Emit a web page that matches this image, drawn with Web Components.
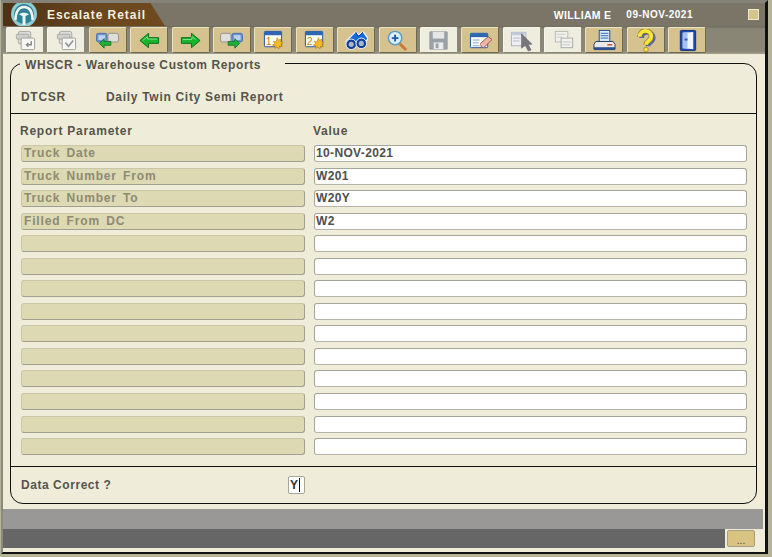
<!DOCTYPE html>
<html>
<head>
<meta charset="utf-8">
<title>Escalate Retail</title>
<style>
    html, body { margin: 0; padding: 0; background: #b5b498; }
    body { font-family: "Liberation Sans", Arial, sans-serif; overflow: hidden; }
</style>
</head>
<body>
<es-window>
    <es-titlebar slot="title" user="WILLIAM E" date="09-NOV-2021">Escalate Retail</es-titlebar>
    <es-toolbar slot="tools">
        <es-tool icon="docback" off></es-tool>
        <es-tool icon="doccheck" off></es-tool>
        <es-tool icon="prevscreen"></es-tool>
        <es-tool icon="left"></es-tool>
        <es-tool icon="right"></es-tool>
        <es-tool icon="nextscreen"></es-tool>
        <es-tool icon="new1"></es-tool>
        <es-tool icon="new2"></es-tool>
        <es-tool icon="binoculars"></es-tool>
        <es-tool icon="zoom"></es-tool>
        <es-tool icon="save" off></es-tool>
        <es-tool icon="erase"></es-tool>
        <es-tool icon="pointer" off></es-tool>
        <es-tool icon="copies" off></es-tool>
        <es-tool icon="printer"></es-tool>
        <es-tool icon="help"></es-tool>
        <es-tool icon="exit"></es-tool>
    </es-toolbar>
    <es-panel slot="main" legend="WHSCR - Warehouse Custom Reports">
        <es-report-head code="DTCSR">Daily Twin City Semi Report</es-report-head>
        <es-param-grid>
            <es-param label="Truck Date" value="10-NOV-2021"></es-param>
            <es-param label="Truck Number From" value="W201"></es-param>
            <es-param label="Truck Number To" value="W20Y"></es-param>
            <es-param label="Filled From DC" value="W2"></es-param>
            <es-param></es-param>
            <es-param></es-param>
            <es-param></es-param>
            <es-param></es-param>
            <es-param></es-param>
            <es-param></es-param>
            <es-param></es-param>
            <es-param></es-param>
            <es-param></es-param>
            <es-param></es-param>
        </es-param-grid>
        <es-confirm value="Y">Data Correct ?</es-confirm>
    </es-panel>
    <es-statusbar slot="status"></es-statusbar>
</es-window>

<script>
// toolbar pictures, 24 box
const STAR = `<path d="M16 9l1.200 2.800 2.600-1.300-.7 2.800 2.900.7-2.300 1.900 1.500 2.500-2.900-.4-.7 2.900-1.900-2.300-2.300 1.700.3-2.900-2.900-.5 2.500-1.500-1.500-2.500 2.900.6z" fill="#f8bc20" stroke="#b5780e" stroke-width=".6"/>`;

const ICONS = {
    docback: `
        <rect x="4.500" y="2.500" width="13" height="13" rx="2" fill="#dcdcd8" stroke="#a8a8a4"/>
        <rect x="2.500" y="5.500" width="13" height="5" rx="1" fill="#cfcfcb" stroke="#a8a8a4"/>
        <rect x="7.500" y="9.500" width="14" height="12" rx="1" fill="#f6f6f2" stroke="#a0a09c"/>
        <path d="M18 12.500v4h-5M15 14.500l-2 2 2 2" fill="none" stroke="#8a8a8e" stroke-width="1.500"/>`,
    doccheck: `
        <rect x="4.500" y="2.500" width="13" height="13" rx="2" fill="#dcdcd8" stroke="#a8a8a4"/>
        <rect x="2.500" y="5.500" width="13" height="5" rx="1" fill="#cfcfcb" stroke="#a8a8a4"/>
        <rect x="7.500" y="9.500" width="14" height="12" rx="1" fill="#f6f6f2" stroke="#a0a09c"/>
        <path d="M11 14l3 4 5-6" fill="none" stroke="#95959a" stroke-width="1.800"/>`,
    prevscreen: `
        <rect x="0.500" y="4.500" width="11" height="9" rx="2" fill="#6f94ce" stroke="#4a70ac"/>
        <rect x="2.500" y="6.500" width="7" height="5" fill="#bcd2ee"/>
        <rect x="12.500" y="4.500" width="11" height="9" rx="2" fill="#dededa" stroke="#8f8f8c"/>
        <path d="M3.500 15l5-5v3h7v4h-7v3z" fill="#1fb13a" stroke="#0d6b1f" stroke-width=".8"/>`,
    left: `<path d="M2 12l9-7.500v4.500h10.500v6H11v4.500z" fill="#17b52e" stroke="#0c6e1b"/><path d="M5 12l5-4v2.500h10" fill="none" stroke="#7fe28a"/>`,
    right: `<path d="M22 12l-9-7.500v4.500H2.500v6H13v4.500z" fill="#17b52e" stroke="#0c6e1b"/><path d="M4 11h9.500V8l4 3" fill="none" stroke="#7fe28a"/>`,
    nextscreen: `
        <rect x="0.500" y="4.500" width="11" height="9" rx="2" fill="#dededa" stroke="#8f8f8c"/>
        <rect x="12.500" y="4.500" width="11" height="9" rx="2" fill="#6f94ce" stroke="#4a70ac"/>
        <rect x="14.500" y="6.500" width="7" height="5" fill="#bcd2ee"/>
        <path d="M20.500 15l-5-5v3h-7v4h7v3z" fill="#1fb13a" stroke="#0d6b1f" stroke-width=".8"/>`,
    new1: `
        <rect x="2.500" y="2.500" width="18" height="16" rx="1" fill="#fbfbf4" stroke="#24509a"/>
        <rect x="2.500" y="2.500" width="18" height="4" fill="#2f66b4"/>
        <text x="4" y="17" font-family="Liberation Sans" font-size="11" fill="#c8841c">1</text>${STAR}`,
    new2: `
        <rect x="2.500" y="2.500" width="18" height="16" rx="1" fill="#fbfbf4" stroke="#24509a"/>
        <rect x="2.500" y="2.500" width="18" height="4" fill="#2f66b4"/>
        <text x="4" y="17" font-family="Liberation Sans" font-size="11" fill="#c8841c">2</text>${STAR}`,
    binoculars: `
        <path d="M1 13L11 3l3 3 5-3 5 7-6 8-5-5-5 8z" fill="#1668d8" stroke="#f4f8fc" stroke-width="1.200"/>
        <path d="M11 3l3 5 5-5" fill="none" stroke="#0d3f96"/>
        <circle cx="6.500" cy="16" r="5.500" fill="#123f96" stroke="#f4f8fc"/>
        <circle cx="6.500" cy="16" r="2.700" fill="#a8b8ca"/>
        <circle cx="17" cy="15" r="5.500" fill="#123f96" stroke="#f4f8fc"/>
        <circle cx="17" cy="15" r="2.700" fill="#a8b8ca"/>`,
    zoom: `
        <path d="M14 15l7 7" stroke="#c87a3a" stroke-width="3"/>
        <circle cx="9.500" cy="9.500" r="7" fill="#d8f0f8" stroke="#5a9cc4" stroke-width="1.500"/>
        <path d="M9.500 6v7M6 9.500h7" stroke="#1f5aa8" stroke-width="2"/>`,
    save: `
        <path d="M3 3h18v18H3z" fill="#9aa2a9" stroke="#929aa1"/>
        <rect x="6" y="3" width="12" height="7" fill="#e4e6e8"/>
        <rect x="7" y="14" width="10" height="7" fill="#eaecee"/>
        <rect x="9" y="15" width="3" height="5" fill="#9aa2a9"/>`,
    erase: `
        <rect x="1.500" y="4.500" width="18" height="15" rx="1" fill="#fbfbf6" stroke="#1d4f9a"/>
        <rect x="1.500" y="4.500" width="18" height="4" fill="#2f66b4"/>
        <path d="M4 11.500h7M4 14.500h6M4 17.500h7" stroke="#8aa0c8"/>
        <path d="M12 15l8-7 4 3-8 8h-3z" fill="#f2b2a4" stroke="#8a5a4c"/>
        <path d="M12 15l3 4 1 0-3-4z" fill="#e6e0d4"/>`,
    pointer: `
        <rect x="1.500" y="3.500" width="15" height="14" fill="#eef0f4" stroke="#aab0bc"/>
        <rect x="1.500" y="3.500" width="15" height="3" fill="#c4ccdc"/>
        <path d="M3 9.500h8M3 12.500h7" stroke="#b4bac6"/>
        <path d="M12 5v15l4-3 3 6 3-1-3-6h4z" fill="#77777a" stroke="#66666a" stroke-width=".6"/>`,
    copies: `
        <rect x="3.500" y="2.500" width="13" height="11" fill="#f2f2ee" stroke="#b8b8b4"/>
        <path d="M5 5.500h9M5 8.500h6" stroke="#c8c8c4"/>
        <rect x="9.500" y="9.500" width="12" height="10" fill="#f2f2ee" stroke="#aaaaa6"/>
        <path d="M11 13.500h9M11 16.500h8" stroke="#c4c4c0"/>`,
    printer: `
        <rect x="6.500" y="1.500" width="11" height="12" fill="#d8ecf8" stroke="#1d4f9a"/>
        <path d="M8 4.500h8M8 7h8M8 9.500h8" stroke="#2f66b4"/>
        <path d="M3 13h18l2 3v5H1v-5z" fill="#e8e8e4" stroke="#233a6a"/>
        <rect x="1" y="19" width="22" height="3" fill="#2c4f90"/>
        <path d="M15 16.500h5" stroke="#c43a2a" stroke-width="1.400"/>`,
    help: `
        <path d="M6.500 8.500c0-8 12-8 12 0 0 4.500-5.500 4.500-5.500 8.500" transform="translate(1.500 1)" fill="none" stroke="#5a68a8" stroke-width="5"/>
        <path d="M6 8c0-8 12-8 12 0 0 4.500-5.500 4.500-5.500 8.500" fill="none" stroke="#8a7a18" stroke-width="5.400"/>
        <path d="M6 8c0-8 12-8 12 0 0 4.500-5.500 4.500-5.500 8.500" fill="none" stroke="#f8e63c" stroke-width="4"/>
        <circle cx="12.500" cy="21.500" r="2.400" fill="#f8e63c" stroke="#8a7a18" stroke-width=".7"/>`,
    exit: `
        <rect x="4.500" y="1.500" width="16" height="21" rx="1" fill="#1d49b0" stroke="#12307c"/>
        <path d="M7 4l11-1v18l-11-1z" fill="#f0f4fb"/>
        <path d="M7 4l5-1v17l-5 0z" fill="#a6c2e8"/>
        <rect x="9" y="10" width="3" height="2" fill="#2a58b8"/>`
};

class EsWindow extends HTMLElement {
    constructor() {
        super();
        this.attachShadow({mode: 'open'}).innerHTML = `
            <style>
                :host {
                    display: block;
                    width: 772px;
                    height: 557px;
                    box-sizing: border-box;
                    padding: 0 4px 3px 1px;
                    background: #b5b498;
                }
                #frame {
                    height: 100%;
                    box-sizing: border-box;
                    display: flex;
                    flex-direction: column;
                    border-left: 2px solid #8c8a7c;
                    border-right: 3px solid #111;
                    border-bottom: 2px solid #111;
                    border-top: 3px solid #85827a;
                    background: #efedd9;
                }
                #main { flex: 1; min-height: 0; display: flex; padding: 9px 8px 5px 7px; }
            </style>
            <div id="frame">
                <slot name="title"></slot>
                <slot name="tools"></slot>
                <div id="main"><slot name="main"></slot></div>
                <slot name="status"></slot>
            </div>`;
    }
}

class EsTitlebar extends HTMLElement {
    constructor() {
        super();
        this.attachShadow({mode: 'open'}).innerHTML = `
            <style>
                :host {
                    display: flex;
                    align-items: center;
                    height: 23px;
                    background: #7a7566;
                    color: #fff;
                    flex: none;
                }
                #tab {
                    width: 162px;
                    height: 100%;
                    display: flex;
                    align-items: center;
                    gap: 8px;
                    padding-left: 7px;
                    box-sizing: border-box;
                    background: linear-gradient(90deg, #4c3216, #6b471f 60%, #6f4a20);
                    clip-path: polygon(0 0, 91% 0, 100% 100%, 0 100%);
                    font: bold 12px "Liberation Sans", Arial, sans-serif;
                    letter-spacing: .95px;
                    color: #f4efdc;
                }
                svg { flex: none; overflow: visible; }
                #user { margin-left: auto; font: bold 10.5px "Liberation Sans", Arial, sans-serif; letter-spacing: .3px; }
                #date { margin-left: 15px; font: bold 10px "Liberation Sans", Arial, sans-serif; letter-spacing: .5px; }
                #box {
                    width: 11px;
                    height: 11px;
                    margin: 0 6px 0 55px;
                    background: #d7c48c;
                    border: 1px solid #efe9cc;
                    box-sizing: border-box;
                }
            </style>
            <div id="tab">
                <svg width="29" height="23" viewBox="0 0 29 23">
                    <circle cx="14" cy="11" r="13" fill="#8fcbd0"/>
                    <circle cx="14" cy="11" r="10" fill="#2f8294"/>
                    <path d="M5.500 17c0-8 3-13 8.500-13s8.500 5 8.500 13" fill="none" stroke="#eef6f4" stroke-width="2.400"/>
                    <path d="M9 11.500c2-2.500 8-2.500 10 0l-3.500 1.500v9h-3V13z" fill="#eef6f4"/>
                </svg>
                <slot></slot>
            </div>
            <span id="user"></span>
            <span id="date"></span>
            <div id="box"></div>`;
    }

    connectedCallback() {
        this.shadowRoot.querySelector('#user').textContent = this.getAttribute('user');
        this.shadowRoot.querySelector('#date').textContent = this.getAttribute('date');
    }
}

class EsToolbar extends HTMLElement {
    constructor() {
        super();
        this.attachShadow({mode: 'open'}).innerHTML = `
            <style>
                :host {
                    display: flex;
                    flex: none;
                    gap: 3.400px;
                    height: 28px;
                    padding: 1px 0 0 3px;
                    box-sizing: border-box;
                    background: linear-gradient(#6e6a5c 0, #8a8676 3px, #8a8676 25px, #a5a18e 100%);
                }
            </style>
            <slot></slot>`;
    }
}

class EsTool extends HTMLElement {
    constructor() {
        super();
        this.attachShadow({mode: 'open'}).innerHTML = `
            <style>
                :host {
                    display: flex;
                    align-items: center;
                    justify-content: center;
                    width: 38px;
                    height: 26px;
                    box-sizing: border-box;
                    border-radius: 2px;
                    background: #d6c28e;
                    border: 1px solid #ece3c0;
                    border-right-color: #6c6654;
                    border-bottom-color: #6c6654;
                }
                :host([off]) {
                    background: #efedde;
                    border-color: #f7f6ec #8a8678 #8a8678 #f7f6ec;
                }
            </style>
            <svg width="23" height="23" viewBox="0 0 24 24"></svg>`;
    }

    connectedCallback() {
        this.shadowRoot.querySelector('svg').innerHTML = ICONS[this.getAttribute('icon')] || '';
    }
}

class EsPanel extends HTMLElement {
    constructor() {
        super();
        this.attachShadow({mode: 'open'}).innerHTML = `
            <style>
                :host {
                    display: flex;
                    flex-direction: column;
                    flex: 1;
                    position: relative;
                    box-sizing: border-box;
                    border: 1px solid #111;
                    border-radius: 13px;
                    background: #efedd9;
                }
                #legend {
                    position: absolute;
                    left: 9px;
                    top: -6px;
                    padding: 0 24px 0 5px;
                    background: #efedd9;
                    font: bold 12px "Liberation Sans", Arial, sans-serif;
                    letter-spacing: .6px;
                    color: #55544c;
                    line-height: 14px;
                }
            </style>
            <div id="legend"></div>
            <slot></slot>`;
    }

    connectedCallback() {
        this.shadowRoot.querySelector('#legend').textContent = this.getAttribute('legend');
    }
}

class EsReportHead extends HTMLElement {
    constructor() {
        super();
        this.attachShadow({mode: 'open'}).innerHTML = `
            <style>
                :host {
                    display: flex;
                    align-items: center;
                    flex: none;
                    height: 50px;
                    padding: 17px 0 0 10px;
                    box-sizing: border-box;
                    border-bottom: 1px solid #111;
                    font: bold 12px "Liberation Sans", Arial, sans-serif;
                    letter-spacing: .7px;
                    color: #55544c;
                }
                #code { width: 85px; }
            </style>
            <span id="code"></span>
            <slot></slot>`;
    }

    connectedCallback() {
        this.shadowRoot.querySelector('#code').textContent = this.getAttribute('code');
    }
}

class EsParamGrid extends HTMLElement {
    constructor() {
        super();
        this.attachShadow({mode: 'open'}).innerHTML = `
            <style>
                :host {
                    display: block;
                    flex: 1;
                    padding: 10px 9px 0 9px;
                }
                #head {
                    display: grid;
                    grid-template-columns: 293px 1fr;
                    height: 21px;
                    align-items: start;
                    font: bold 12px/14px "Liberation Sans", Arial, sans-serif;
                    letter-spacing: .75px;
                    color: #55544c;
                }
                #rows { display: grid; grid-auto-rows: 22.550px; }
            </style>
            <div id="head"><span>Report Parameter</span><span>Value</span></div>
            <div id="rows"><slot></slot></div>`;
    }
}

class EsParam extends HTMLElement {
    constructor() {
        super();
        this.attachShadow({mode: 'open'}).innerHTML = `
            <style>
                :host {
                    display: grid;
                    grid-template-columns: 284px 433px;
                    column-gap: 9px;
                    margin-left: 1px;
                    height: 17px;
                }
                #label, #value {
                    box-sizing: border-box;
                    height: 17px;
                    font: bold 12px/15px "Liberation Sans", Arial, sans-serif;
                    border-radius: 3px;
                    white-space: pre;
                }
                #label {
                    padding-left: 2px;
                    background: #dcd9b3;
                    color: #8c8b74;
                    letter-spacing: .85px;
                    word-spacing: 2px;
                    border: 1px solid #bdbcaa;
                    border-color: #c9c7a8 #a09f90 #a09f90 #c9c7a8;
                }
                #value {
                    padding-left: 1px;
                    background: #fff;
                    color: #50504a;
                    letter-spacing: .35px;
                    border: 1px solid #a6a59a;
                    border-color: #a6a59a #a6a59a #b5b4a8 #a6a59a;
                }
            </style>
            <div id="label"></div>
            <div id="value"></div>`;
    }

    connectedCallback() {
        this.shadowRoot.querySelector('#label').textContent = this.getAttribute('label') || '';
        this.shadowRoot.querySelector('#value').textContent = this.getAttribute('value') || '';
    }
}

class EsConfirm extends HTMLElement {
    constructor() {
        super();
        this.attachShadow({mode: 'open'}).innerHTML = `
            <style>
                :host {
                    display: flex;
                    flex: none;
                    align-items: center;
                    height: 37px;
                    padding-left: 10px;
                    box-sizing: border-box;
                    border-top: 1px solid #111;
                    font: bold 12px "Liberation Sans", Arial, sans-serif;
                    letter-spacing: .55px;
                    color: #55544c;
                }
                #text { width: 267px; }
                #field {
                    box-sizing: border-box;
                    width: 17px;
                    height: 18px;
                    background: #fff;
                    border: 1px solid #a6a59a;
                    border-radius: 2px;
                    line-height: 16px;
                    display: flex;
                    padding-left: 1px;
                    color: #333;
                    letter-spacing: 0;
                }
                #caret { width: 1px; height: 14px; margin: 1px 0 0 1px; background: #111; }
            </style>
            <span id="text"><slot></slot></span>
            <div id="field"><span id="val"></span><span id="caret"></span></div>`;
    }

    connectedCallback() {
        this.shadowRoot.querySelector('#val').textContent = this.getAttribute('value');
    }
}

class EsStatusbar extends HTMLElement {
    constructor() {
        super();
        this.attachShadow({mode: 'open'}).innerHTML = `
            <style>
                :host {
                    display: block;
                    flex: none;
                    padding-bottom: 4px;
                }
                #hint { height: 20px; margin-right: 2px; background: #999897; }
                #line {
                    display: flex;
                    align-items: center;
                    height: 19px;
                    background: linear-gradient(90deg, #666 722px, #efedd9 722px);
                }
                button {
                    box-sizing: border-box;
                    width: 28px;
                    height: 17px;
                    margin-left: 724px;
                    padding: 5px 0 0;
                    background: #d9c382;
                    border: 1px solid #a89d7c;
                    border-radius: 2px;
                    font: 10px "Liberation Sans", Arial, sans-serif;
                    color: #444;
                    line-height: 10px;
                }
            </style>
            <div id="hint"></div>
            <div id="line"><button>...</button></div>`;
    }
}

window.customElements.define('es-window', EsWindow);
window.customElements.define('es-titlebar', EsTitlebar);
window.customElements.define('es-toolbar', EsToolbar);
window.customElements.define('es-tool', EsTool);
window.customElements.define('es-panel', EsPanel);
window.customElements.define('es-report-head', EsReportHead);
window.customElements.define('es-param-grid', EsParamGrid);
window.customElements.define('es-param', EsParam);
window.customElements.define('es-confirm', EsConfirm);
window.customElements.define('es-statusbar', EsStatusbar);
</script>
</body>
</html>
